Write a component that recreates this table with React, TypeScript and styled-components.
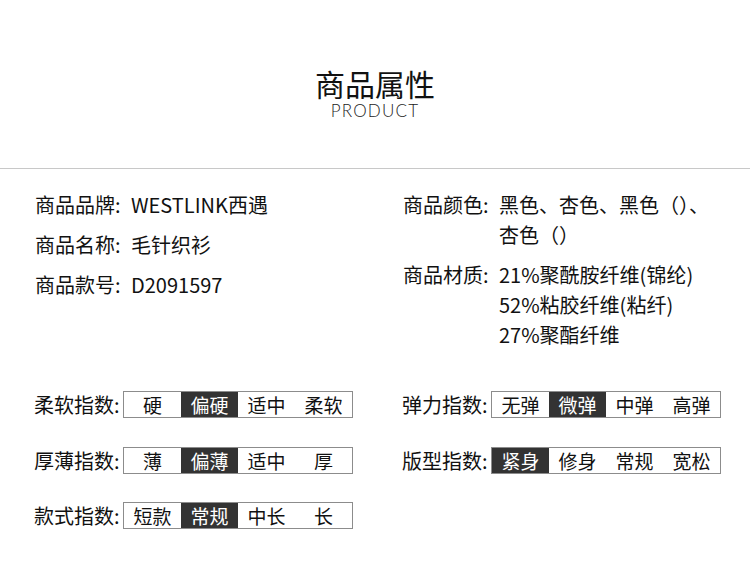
import React from "react";
import styled, { createGlobalStyle } from "styled-components";

const Global = createGlobalStyle`
  html, body { margin: 0; padding: 0; background: #fff; }
  body { font-family: "Noto Sans CJK SC", "Noto Sans", sans-serif; color: #111; }
`;

const Page = styled.div`
  width: 750px;
`;

const Header = styled.header`
  height: 169px;
  border-bottom: 1px solid #c8c8c8;
  display: flex;
  flex-direction: column;
  align-items: center;
  padding-top: 66px;
  box-sizing: border-box;
`;

const Title = styled.h1`
  margin: 0;
  font-size: 30px;
  line-height: 34px;
  font-weight: 400;
  color: #111;
`;

const SubTitle = styled.div`
  margin-top: 2px;
  font-family: "Lato", "Noto Sans", sans-serif;
  font-weight: 300;
  font-size: 17px;
  line-height: 18px;
  letter-spacing: 1.2px;
  color: #222;
`;

const Info = styled.section`
  display: grid;
  grid-template-columns: 368px 1fr;
  padding: 21px 0 0 35px;
  height: 222px;
  box-sizing: border-box;
`;

const InfoCol = styled.div`
  display: flex;
  flex-direction: column;
  gap: 10px;
`;

const InfoRow = styled.div`
  display: flex;
  font-size: 20px;
  line-height: 30px;
`;

const InfoLabel = styled.span`
  flex: 0 0 96px;
  white-space: nowrap;
`;

const InfoValue = styled.span`
  display: flex;
  flex-direction: column;
  white-space: nowrap;
`;

const Indexes = styled.section`
  display: grid;
  grid-template-columns: 368px 1fr;
  row-gap: 28.5px;
  padding: 0 0 0 34px;
`;

const IndexRow = styled.div`
  display: flex;
  align-items: center;
  height: 27px;
`;

const IndexLabel = styled.span`
  flex: 0 0 89px;
  font-size: 20px;
  line-height: 27px;
  white-space: nowrap;
`;

const Scale = styled.div`
  display: flex;
  border: 1px solid #8c8c8c;
  height: 25px;
`;

const Cell = styled.span<{ $on?: boolean }>`
  width: 57px;
  display: flex;
  align-items: center;
  justify-content: center;
  font-size: 19px;
  line-height: 25px;
  background: ${(p) => (p.$on ? "#333" : "#fff")};
  color: ${(p) => (p.$on ? "#fff" : "#111")};
`;

type Idx = { label: string; opts: string[]; on: number };

const indexes: Idx[] = [
  { label: "柔软指数:", opts: ["硬", "偏硬", "适中", "柔软"], on: 1 },
  { label: "弹力指数:", opts: ["无弹", "微弹", "中弹", "高弹"], on: 1 },
  { label: "厚薄指数:", opts: ["薄", "偏薄", "适中", "厚"], on: 1 },
  { label: "版型指数:", opts: ["紧身", "修身", "常规", "宽松"], on: 0 },
  { label: "款式指数:", opts: ["短款", "常规", "中长", "长"], on: 1 },
];

export default function App() {
  return (
    <Page>
      <Global />
      <Header>
        <Title>商品属性</Title>
        <SubTitle>PRODUCT</SubTitle>
      </Header>
      <Info>
        <InfoCol>
          <InfoRow>
            <InfoLabel>商品品牌:</InfoLabel>
            <InfoValue>WESTLINK西遇</InfoValue>
          </InfoRow>
          <InfoRow>
            <InfoLabel>商品名称:</InfoLabel>
            <InfoValue>毛针织衫</InfoValue>
          </InfoRow>
          <InfoRow>
            <InfoLabel>商品款号:</InfoLabel>
            <InfoValue>D2091597</InfoValue>
          </InfoRow>
        </InfoCol>
        <InfoCol>
          <InfoRow>
            <InfoLabel>商品颜色:</InfoLabel>
            <InfoValue>
              <span>黑色、杏色、黑色（）、</span>
              <span>杏色（）</span>
            </InfoValue>
          </InfoRow>
          <InfoRow>
            <InfoLabel>商品材质:</InfoLabel>
            <InfoValue>
              <span>21%聚酰胺纤维(锦纶)</span>
              <span>52%粘胶纤维(粘纤)</span>
              <span>27%聚酯纤维</span>
            </InfoValue>
          </InfoRow>
        </InfoCol>
      </Info>
      <Indexes>
        {indexes.map((it) => (
          <IndexRow key={it.label}>
            <IndexLabel>{it.label}</IndexLabel>
            <Scale>
              {it.opts.map((o, i) => (
                <Cell key={i} $on={i === it.on}>
                  {o}
                </Cell>
              ))}
            </Scale>
          </IndexRow>
        ))}
      </Indexes>
    </Page>
  );
}
